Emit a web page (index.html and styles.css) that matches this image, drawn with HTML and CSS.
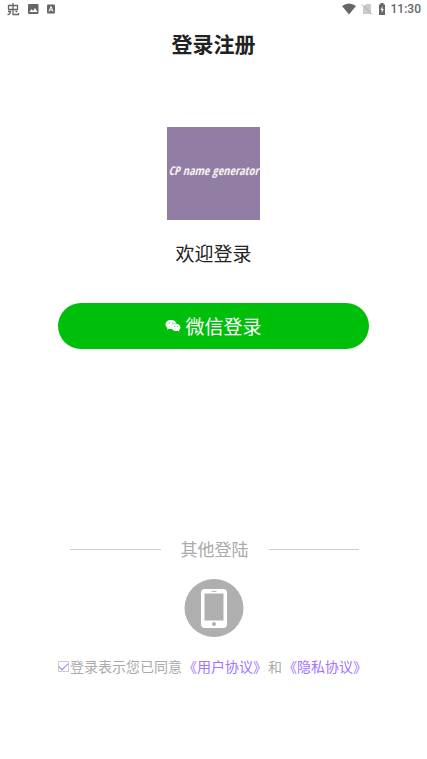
FILE: index.html
```html
<!DOCTYPE html>
<html lang="zh-CN">
<head>
<meta charset="utf-8">
<meta name="viewport" content="width=device-width, initial-scale=1">
<title>登录注册</title>
<link rel="stylesheet" href="styles.css">
</head>
<body>
<div class="status">
  <div class="status-left">
    <svg width="14" height="14" viewBox="0 0 14 14" fill="none" stroke="currentColor" stroke-width="1.300"><path d="M2.500 3.500h9v4h-9zM7 1v9M1.500 12.500c2 0 3-1 3-3H2M7 10v2.500h5.500V11M9.500 9.500h2"/></svg>
    <svg width="12" height="12" viewBox="0 0 12 12"><rect x="1" y="1" width="10.500" height="10" rx="1" fill="currentColor"/><path d="M2.500 9l2-3 1.500 2 2-3 2.500 4z" fill="#fff"/></svg>
    <svg width="10" height="12" viewBox="0 0 10 12"><rect x="1" y="1.500" width="8" height="9" rx="1" fill="currentColor"/><path d="M3 8.500l2-5 2 5M3.700 7h2.600" fill="none" stroke="#fff"/></svg>
  </div>
  <div class="status-right">
    <svg width="14" height="12" viewBox="0 0 14 12"><path d="M0 3Q7-2 14 3L7 11.500z" fill="currentColor"/></svg>
    <svg class="faint" width="12" height="12" viewBox="0 0 12 12"><path d="M2 4L5 1h5v10H2z" fill="currentColor"/><path d="M1 1.500l10 10" stroke="#aaa"/></svg>
    <svg width="8" height="12" viewBox="0 0 8 12"><path d="M1 1.500h1.500V0h3v1.500H7V12H1z" fill="currentColor"/><path d="M4.500 3L2.500 7h1.300v3l2-4H4.500z" fill="#fff"/></svg>
    <span class="clock">11:30</span>
  </div>
</div>
<header class="header"><h1>登录注册</h1></header>
<main class="main">
  <div class="logo">CP name generator</div>
  <p class="welcome">欢迎登录</p>
  <button class="wechat" type="button">
    <svg width="16" height="14" viewBox="0 0 16 14"><path d="M6 1C2.700 1 .5 3 .5 5.500c0 1.500.8 2.700 2 3.500L2 10.800l2-1c.7.2 1.300.2 2 .2h.8C6.500 6.500 8 4.500 11.500 4.300 10.700 2.200 8.500 1 6 1z" fill="#fff"/><path d="M11 4.700c-2.500 0-4.400 1.600-4.400 3.700S8.500 12 11 12c.6 0 1.100-.1 1.600-.2l1.700.9-.4-1.500c.9-.7 1.500-1.600 1.500-2.800 0-2.100-1.900-3.700-4.400-3.700z" fill="#fff"/><g fill="#00bf0b"><circle cx="4.200" cy="4" r=".6"/><circle cx="7.700" cy="4" r=".6"/><circle cx="9.600" cy="7.300" r=".5"/><circle cx="12.500" cy="7.300" r=".5"/></g></svg>
    <span>微信登录</span>
  </button>
  <div class="divider"><span>其他登陆</span></div>
  <button class="phone" type="button" aria-label="手机登录">
    <svg width="60" height="58" viewBox="0 0 60 58"><ellipse cx="30" cy="29" rx="29.500" ry="29" fill="#afafaf"/><rect x="17" y="10" width="26" height="39" rx="4" fill="#fff"/><rect x="20.500" y="14.500" width="19" height="27" fill="#afafaf"/><path d="M27.500 12.300h5" stroke="#afafaf"/><circle cx="30" cy="45" r="2" fill="#afafaf"/></svg>
  </button>
  <div class="agreement">
    <input class="check" id="agree" type="checkbox" checked>
    <label for="agree">登录表示您已同意</label>
    <a href="#terms">《用户协议》</a>
    <span>和</span>
    <a href="#privacy">《隐私协议》</a>
  </div>
</main>
</body>
</html>
```
FILE: styles.css
```css
* {
  box-sizing: border-box;
}

body {
  margin: 0;
  background: #fff;
  color: #222;
  font-family: "Noto Sans CJK SC", sans-serif;
}

h1,
p {
  margin: 0;
}

button {
  padding: 0;
  border: 0;
  background: none;
  font: inherit;
  cursor: pointer;
}

svg {
  display: block;
}

.status {
  display: flex;
  justify-content: space-between;
  align-items: center;
  height: 18px;
  padding: 0 6px;
  color: #666;
}

.status-left {
  display: flex;
  align-items: center;
  gap: 7px;
}

.status-right {
  display: flex;
  align-items: center;
  gap: 5px;
}

.faint {
  color: #ccc;
}

.clock {
  font: 500 12px/18px Roboto, sans-serif;
}

.header {
  display: flex;
  justify-content: center;
  align-items: center;
  height: 49px;
}

.header h1 {
  font-size: 21px;
  line-height: 32px;
  font-weight: 700;
}

.main {
  display: flex;
  flex-direction: column;
  align-items: center;
  padding: 60px 58px 24px;
}

.logo {
  display: flex;
  justify-content: center;
  width: 93px;
  height: 93px;
  padding-top: 32px;
  background: #927da5;
  color: #f4f0ee;
  font: italic 700 12px/24px "Liberation Sans Narrow", "Open Sans Condensed", sans-serif;
  white-space: nowrap;
}

.welcome {
  margin-top: 19px;
  font-size: 19px;
  line-height: 28px;
}

.wechat {
  display: flex;
  justify-content: center;
  align-items: center;
  gap: 4px;
  width: 100%;
  height: 46px;
  margin-top: 36px;
  border-radius: 23px;
  background: #00bf0b;
  color: #fff;
  font-size: 19px;
  line-height: 28px;
}

.divider {
  display: flex;
  align-items: center;
  gap: 20px;
  width: 100%;
  margin-top: 188px;
  padding: 0 10px 0 12px;
  color: #aaa;
  font-size: 17px;
  line-height: 24px;
}

.divider::before,
.divider::after {
  content: "";
  flex: 1;
  height: 1px;
  background: #ccc;
}

.phone {
  margin-top: 18px;
}

.agreement {
  display: flex;
  align-items: center;
  gap: 1px;
  width: 100%;
  margin-top: 19px;
  color: #aaa;
  font-size: 14px;
  line-height: 20px;
  white-space: nowrap;
}

.agreement a {
  color: #a273ff;
  text-decoration: none;
}

.check {
  display: grid;
  justify-items: center;
  align-items: start;
  flex: none;
  appearance: none;
  width: 11px;
  height: 11px;
  margin: 0;
  padding-top: 1px;
  border: 1px solid #ccc;
}

.check:checked::before {
  content: "";
  width: 8px;
  height: 4px;
  border: solid #a273ff;
  border-width: 0 0 1px 1px;
  transform: rotate(-45deg);
}
```
